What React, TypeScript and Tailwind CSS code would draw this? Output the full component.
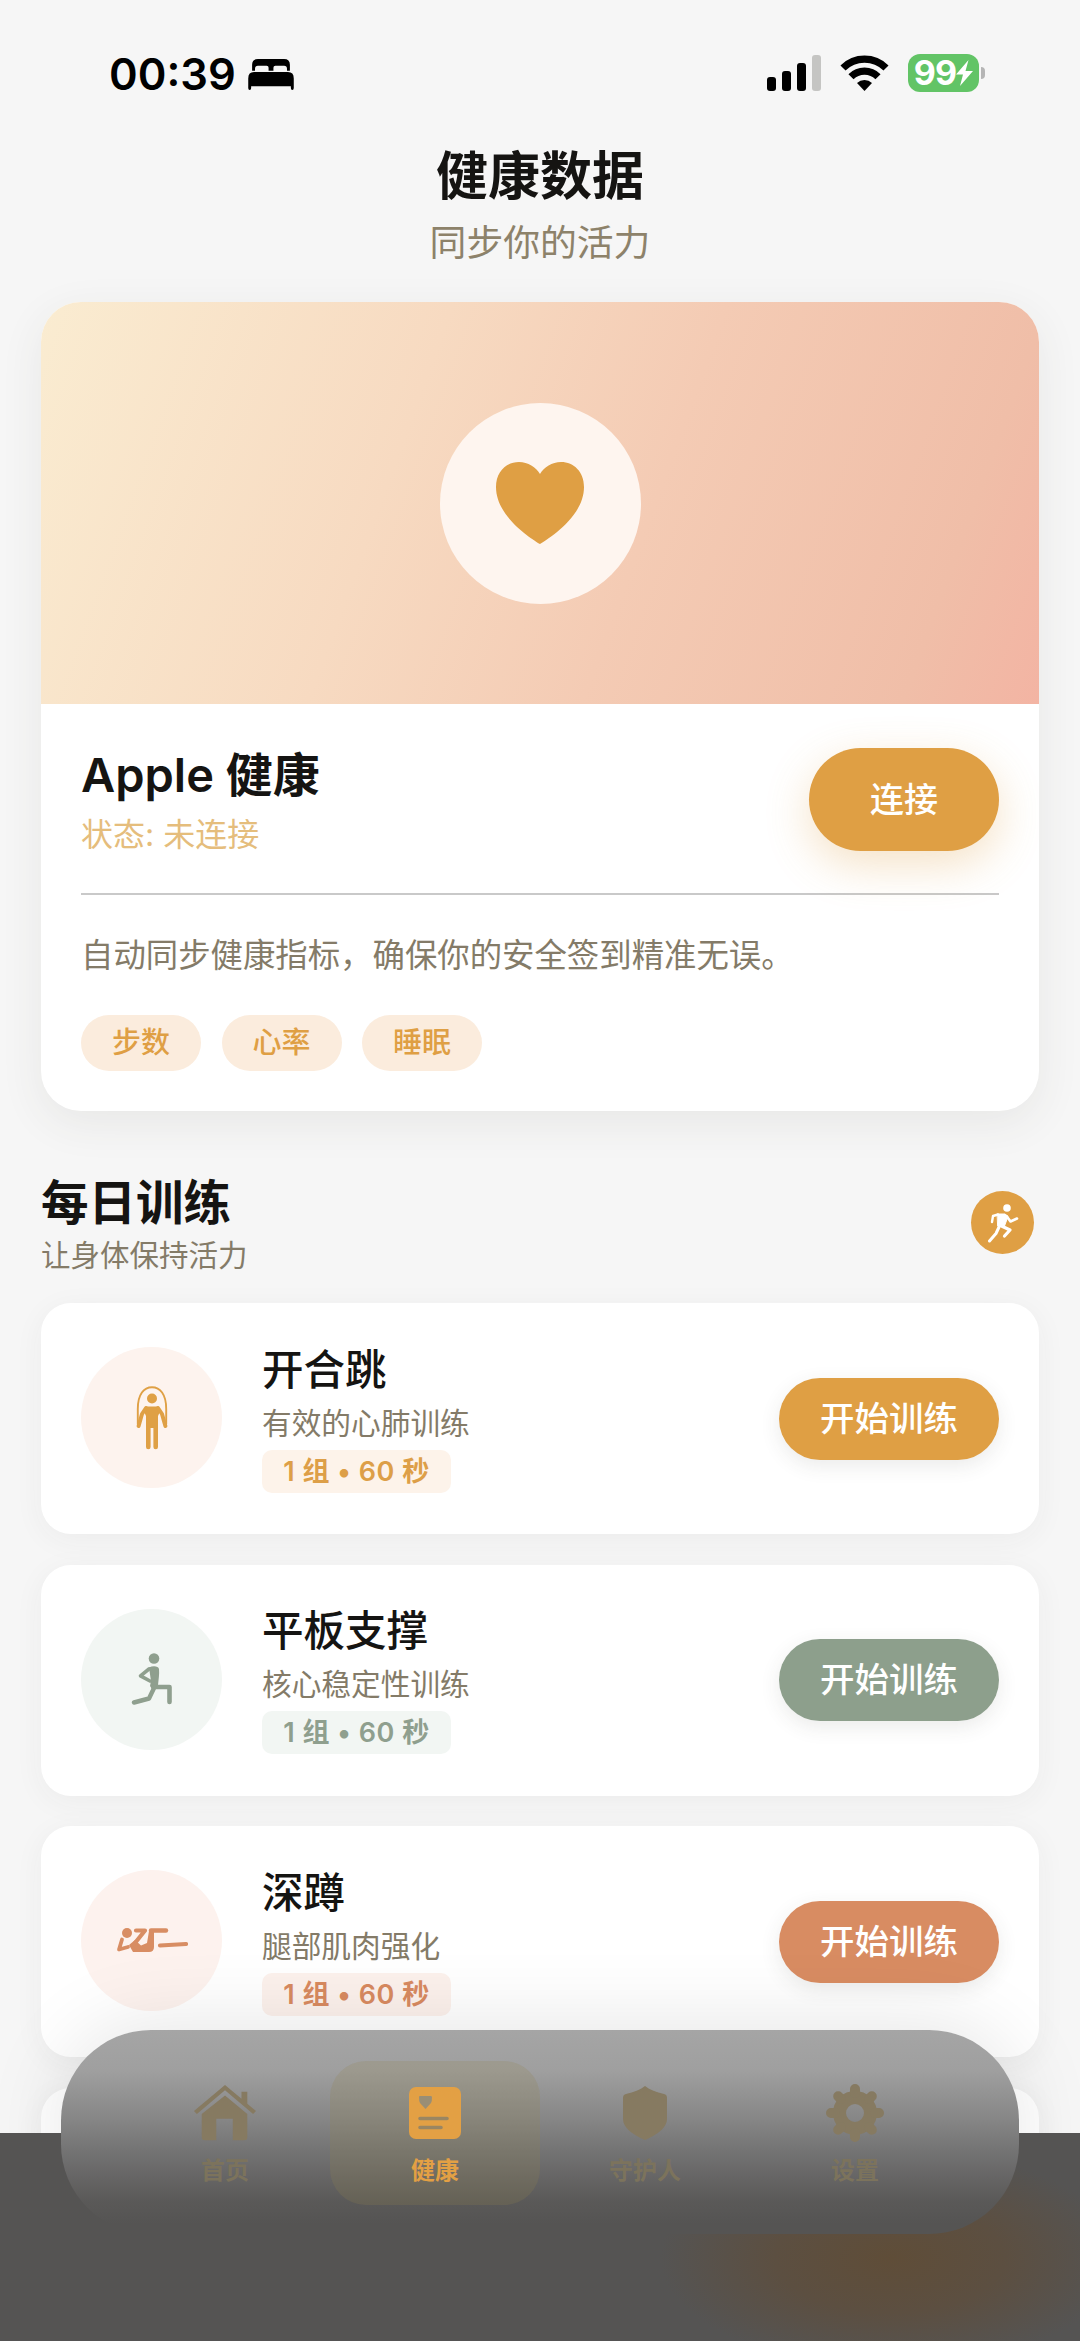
import React from 'react';

type Tone = 'amber' | 'sage' | 'clay';

const tones: Record<Tone, { circle: string; badge: string; button: string }> = {
  amber: {
    circle: 'bg-[#fdf3ee] text-[#dfa045]',
    badge: 'bg-[#fdf3ea] text-[#dd9f48]',
    button: 'bg-[#df9f44]',
  },
  sage: {
    circle: 'bg-[#f2f6f3] text-[#8f9f8e]',
    badge: 'bg-[#f2f6f3] text-[#8f9f8e]',
    button: 'bg-[#8d9f8c]',
  },
  clay: {
    circle: 'bg-[#fdf2ee] text-[#d88d63]',
    badge: 'bg-[#fcf1ec] text-[#d88a60]',
    button: 'bg-[#d88c62]',
  },
};

const JumpRopeIcon = () => (
  <svg width="32" height="64" viewBox="0 0 32 64" fill="none" stroke="currentColor" strokeLinecap="round" strokeLinejoin="round">
    <path d="M1.800 38V23C1.800 8 8 1.300 16 1.300S30.200 8 30.200 23v15" strokeWidth="1.900" />
    <circle cx="16" cy="12.500" r="5" fill="currentColor" stroke="none" />
    <path d="M10 20.500h12l2.500 4L22 30v31a2.300 2.300 0 0 1-4.600 0V42h-2.800v19a2.300 2.300 0 0 1-4.600 0V30l-2.500-5.500z" fill="currentColor" stroke="none" />
    <path d="M10 22 6 28 2.600 40M22 22l4 6 3.400 12" strokeWidth="4" />
  </svg>
);

const LungeIcon = () => (
  <svg width="42" height="52" viewBox="0 0 42 52" fill="none" stroke="currentColor" strokeLinecap="round" strokeLinejoin="round">
    <circle cx="23" cy="5.500" r="5.300" fill="currentColor" stroke="none" />
    <path d="M18 14.500c4-2 9.500-1.500 10 1.500.5 5-.5 11-1 16l-6 4-2-3 1-5z" fill="currentColor" stroke="none" />
    <path d="m18 16-8.500 6.800L19 28" strokeWidth="3.600" />
    <path d="M22.500 34H38.500v15" strokeWidth="4.600" />
    <path d="M23.500 34 18 45.500 3 49.500" strokeWidth="4.400" />
  </svg>
);

const FloorIcon = () => (
  <svg width="72" height="27" viewBox="0 0 72 27" fill="none" stroke="currentColor" strokeLinecap="round" strokeLinejoin="round">
    <circle cx="11" cy="6" r="5" fill="currentColor" stroke="none" />
    <path d="M20 3.500h9L19 16" strokeWidth="4.200" />
    <path d="M6 12.500 3 22.500l9-2.500" strokeWidth="3.800" />
    <path d="m13 18 6-5 6 5.500 6-2.500 2-12h5v16q0 5-5 5H17z" fill="currentColor" stroke="none" />
    <path d="M35 3.500h15" strokeWidth="4.400" />
    <path d="m44 18.500 26-1.500" strokeWidth="4.200" />
  </svg>
);

const RunnerIcon = () => (
  <svg width="32" height="40" viewBox="0 0 32 40" fill="none" stroke="currentColor" strokeLinecap="round" strokeLinejoin="round">
    <circle cx="20" cy="5" r="3.800" fill="currentColor" stroke="none" />
    <path d="M10.500 11h7.500l3 2.500L17.500 23H11z" fill="currentColor" stroke="currentColor" strokeWidth="1" />
    <path d="M11 11.500 6 13 5 19" strokeWidth="2.400" />
    <path d="m19.500 13 4 5.500 6.500-3" strokeWidth="2.600" />
    <path d="m14.500 23 8.500 4-5.500 6" strokeWidth="3.200" />
    <path d="M12.500 23 9 30.500 2.500 38" strokeWidth="3" />
  </svg>
);

const HomeIcon = () => (
  <svg width="64" height="58" viewBox="0 0 66 58" fill="currentColor">
    <path d="M33 0 1 27l3 3L33 5.500l29 24.500 3-3-9-7.600V7h-6v7.300z" />
    <path d="M33 11 9 30v24q0 3 3 3h12V35h17v22h12q3 0 3-3V30z" />
  </svg>
);

const HealthIcon = () => (
  <svg width="52" height="52" viewBox="0 0 52 52">
    <rect width="52" height="52" rx="7" fill="#e3a044" />
    <path d="M10 10q0-1 1-1h11q1 0 1 1.500 0 4-1 5.500l-5.500 6-5.500-6q-1-1.500-1-6z" fill="#9a8e75" />
    <path d="M11 31.500h27M11 40.500h21" stroke="#9a8662" strokeWidth="3.600" strokeLinecap="round" />
  </svg>
);

const ShieldIcon = () => (
  <svg width="46" height="56" viewBox="0 0 46 56" fill="currentColor">
    <path d="M23 1c5 4 11 6 19 8q3 .5 3 4v21c0 8-8 15-22 21C9 49 1 42 1 34V13q0-3.500 3-4C12 7 18 5 23 1z" />
  </svg>
);

const GearIcon = () => (
  <svg width="58" height="58" viewBox="0 0 58 58" fill="none" stroke="currentColor">
    <circle cx="29" cy="29" r="15.500" strokeWidth="13" />
    <path d="M29 9V5M29 53v-4M9 29H5M53 29h-4M15 15l-2.800-2.800M45.800 45.800 43 43M15 43l-2.800 2.800M45.800 12.200 43 15" strokeWidth="10" strokeLinecap="round" />
  </svg>
);

const StatusBar = () => (
  <div className="flex h-[146px] items-start justify-between pt-[51px] pr-[95px] pl-[109px] text-black">
    <div className="flex items-center gap-[12px]">
      <span className="text-[43.500px] leading-[46px] font-semibold">00:39</span>
      <svg width="46" height="31" viewBox="0 0 47 32" fill="currentColor">
        <path d="M4 12V6q0-6 6-6h27q6 0 6 6v6h-3v-2q0-3-3-3H28q-2 0-2 2v3h-5V9q0-2-2-2h-9q-3 0-3 3v2z" />
        <path d="M0 20q0-6.500 6-6.500h35q6 0 6 6.500v10q0 2-1.500 2T44 30v-2H3v2q0 2-1.500 2T0 30z" />
      </svg>
    </div>
    <div className="flex items-center pt-[3px]">
      <svg width="54" height="36" viewBox="0 0 54 36">
        <rect y="22" width="9" height="14" rx="3" />
        <rect x="15" y="16" width="9" height="20" rx="3" />
        <rect x="30" y="8" width="9" height="28" rx="3" />
        <rect x="45" y="0" width="9" height="36" rx="3" fill="#c5c5c3" />
      </svg>
      <svg className="ml-[19px]" width="49" height="36" viewBox="0 0 49 36" fill="none" stroke="currentColor" strokeWidth="7.200">
        <path d="M3 13a30.500 30.500 0 0 1 43 0" />
        <path d="M11 21.800a19 19 0 0 1 27 0" />
        <path d="m24.500 36-7.500-8a11 11 0 0 1 15 0z" fill="currentColor" stroke="none" />
      </svg>
      <div className="ml-[19px] flex h-[38px] w-[71px] items-center justify-center rounded-[12px] bg-[#62c466] text-white">
        <span className="text-[34px] leading-none font-bold tracking-tight">99</span>
        <svg width="17" height="26" viewBox="0 0 17 26" fill="currentColor">
          <path d="M12.500 0 0 14.500h7L4 26l13-15H9.500z" />
        </svg>
      </div>
      <span className="ml-[2px] h-[12px] w-[4px] rounded-r-full bg-[#b5b5b5]" />
    </div>
  </div>
);

const HealthCard = () => (
  <section className="mx-[41px] mt-[35px] h-[809px] overflow-hidden rounded-[40px] bg-white shadow-[0_12px_44px_rgba(60,60,50,0.08)]">
    <div className="flex h-[402px] items-center justify-center bg-[linear-gradient(110deg,#faecd1_0%,#f7dac1_36%,#f4cbb4_60%,#f0bea8_88%,#f3b4a3_100%)]">
      <div className="flex h-[201px] w-[201px] items-center justify-center rounded-full bg-[#fef5ef]">
        <svg width="88" height="82" viewBox="0 0 88 82" fill="#df9f44">
          <path d="M44 82C36 77 0 55 0 25 0 10 10 0 23 0c9 0 17 5 21 12C48 5 56 0 65 0c13 0 23 10 23 25 0 30-36 52-44 57z" />
        </svg>
      </div>
    </div>
    <div className="px-[40px]">
      <div className="flex h-[191px] justify-between border-b-2 border-[#c9c9c9]">
        <div className="pt-[44px]">
          <h2 className="text-[47px] leading-[54px] font-semibold text-[#151412]">Apple 健康</h2>
          <p className="mt-[9px] text-[32px] leading-[48px] text-[#e5bd7c]">状态: 未连接</p>
        </div>
        <button className="mt-[44px] h-[103px] w-[190px] rounded-full bg-[#df9f44] text-[34px] font-medium text-white shadow-[0_14px_44px_rgba(223,159,68,0.3)]">
          连接
        </button>
      </div>
      <p className="mt-[37px] text-[32.400px] leading-[48px] whitespace-nowrap text-[#847b68]">
        自动同步健康指标，确保你的安全签到精准无误。
      </p>
      <div className="mt-[35px] flex gap-[20.500px]">
        {['步数', '心率', '睡眠'].map((tag) => (
          <span key={tag} className="flex h-[56px] w-[120px] items-center justify-center rounded-full bg-[#fbecdd] text-[29px] font-medium text-[#df9f44]">
            {tag}
          </span>
        ))}
      </div>
    </div>
  </section>
);

interface Workout {
  title: string;
  description: string;
  tone: Tone;
  icon: React.ReactNode;
}

const workouts: Workout[] = [
  { title: '开合跳', description: '有效的心肺训练', tone: 'amber', icon: <JumpRopeIcon /> },
  { title: '平板支撑', description: '核心稳定性训练', tone: 'sage', icon: <LungeIcon /> },
  { title: '深蹲', description: '腿部肌肉强化', tone: 'clay', icon: <FloorIcon /> },
];

const cardClass = 'h-[231px] shrink-0 rounded-[30px] bg-white shadow-[0_6px_30px_rgba(60,60,50,0.05)]';

const WorkoutCard: React.FC<{ workout: Workout }> = ({ workout }) => {
  const tone = tones[workout.tone];
  return (
    <article className={`${cardClass} flex items-center px-[40px]`}>
      <div className={`mb-[2px] flex h-[141px] w-[141px] items-center justify-center rounded-full ${tone.circle}`}>{workout.icon}</div>
      <div className="ml-[40px] flex-1">
        <h3 className="text-[41.500px] leading-[50px] font-medium text-[#151412]">{workout.title}</h3>
        <p className="mt-[8px] text-[29.700px] leading-[40px] text-[#847b68]">{workout.description}</p>
        <span className={`mt-[7px] flex h-[43px] w-[189px] items-center justify-center rounded-[10px] text-[27px] leading-none font-semibold tracking-[0.5px] ${tone.badge}`}>
          1 组 • 60 秒
        </span>
      </div>
      <button className={`h-[82px] w-[220px] rounded-full text-[34.500px] font-medium text-white shadow-[0_6px_20px_rgba(60,60,50,0.1)] ${tone.button}`}>
        开始训练
      </button>
    </article>
  );
};

const tabs = [
  { label: '首页', icon: <HomeIcon />, active: false },
  { label: '健康', icon: <HealthIcon />, active: true },
  { label: '守护人', icon: <ShieldIcon />, active: false },
  { label: '设置', icon: <GearIcon />, active: false },
];

const TabBar = () => (
  <nav className="absolute inset-x-[61px] top-[2030px] flex h-[204px] justify-center rounded-[90px] bg-[linear-gradient(180deg,#a5a5a5_0%,#9f9f9f_20%,#888888_42%,#757575_58%,#666565_72%,#5a5958_84%,#555453_95%)] pt-[31px]">
    {tabs.map((tab) => (
      <div
        key={tab.label}
        className={`flex h-[144px] w-[210px] flex-col items-center rounded-[36px] ${
          tab.active ? 'bg-[#928350]/22 text-[#e3a044]' : 'text-[#867a61]'
        }`}
      >
        <div className="mt-[22px] flex h-[60px] items-center">{tab.icon}</div>
        <span className={`mt-[13px] text-[24px] leading-[30px] font-semibold ${tab.active ? '' : 'text-[#7c735c]'}`}>{tab.label}</span>
      </div>
    ))}
  </nav>
);

export default function App() {
  return (
    <div
      lang="zh-CN"
      className="relative h-[2341px] w-[1080px] overflow-hidden bg-[#f6f6f6] font-['Inter','Noto_Sans_CJK_SC',sans-serif]"
    >
      <StatusBar />
      <header className="text-center">
        <h1 className="text-[52px] leading-[62px] font-bold text-[#151412]">健康数据</h1>
        <p className="mt-[11px] text-[36.800px] leading-[48px] text-[#8d826a]">同步你的活力</p>
      </header>
      <HealthCard />

      <div className="mt-[64px] flex h-[128px] justify-between pr-[46px] pl-[41px]">
        <div>
          <h2 className="text-[47.500px] leading-[56px] font-semibold text-[#151412]">每日训练</h2>
          <p className="mt-[3px] text-[29.500px] leading-[42px] text-[#847b68]">让身体保持活力</p>
        </div>
        <div className="mt-[16px] flex h-[63px] w-[63px] items-center justify-center rounded-full bg-[#df9f44] text-white">
          <RunnerIcon />
        </div>
      </div>

      <div className="flex flex-col gap-[30.500px] px-[41px]">
        {workouts.map((workout) => (
          <WorkoutCard key={workout.title} workout={workout} />
        ))}
        <div className={cardClass} />
      </div>

      {/* the tab bar's shadow falls on the list but not on the dimmed area */}
      <div className="absolute inset-x-[61px] top-[2030px] h-[204px] rounded-[90px] shadow-[0_-6px_80px_rgba(0,0,0,0.1)]" />
      <div className="absolute inset-x-0 bottom-0 h-[208px] bg-[#555453] bg-[radial-gradient(ellipse_230px_110px_at_890px_125px,#5f4d38_0%,#5c4f41_50%,#555453_100%)]" />
      <TabBar />
    </div>
  );
}
